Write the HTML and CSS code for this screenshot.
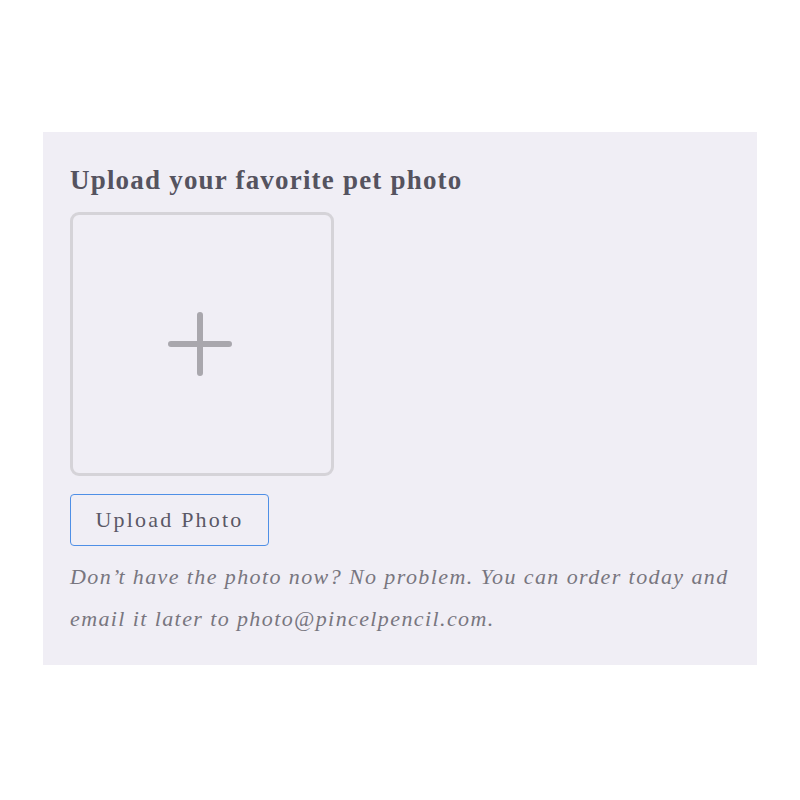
FILE: index.html
```html
<!DOCTYPE html>
<html>
<head>
<meta charset="utf-8">
<link rel="stylesheet" href="styles.css">
</head>
<body>
<div class="page">
  <section class="panel">
    <h2 class="title">Upload your favorite pet photo</h2>
    <div class="dropzone">
      <svg class="plus" width="64" height="64" viewBox="0 0 64 64">
        <path d="M32 3 V61 M3 32 H61" stroke="#a9a7ad" stroke-width="6" stroke-linecap="round" fill="none"/>
      </svg>
    </div>
    <button class="upload-btn">Upload Photo</button>
    <p class="note">Don’t have the photo now? No problem. You can order today and email it later to photo@pincelpencil.com.</p>
  </section>
</div>
</body>
</html>
```
FILE: styles.css
```css
html, body {
  margin: 0;
  padding: 0;
  background: #ffffff;
}
.page {
  padding: 132px 43px 0 43px;
}
.panel {
  background: #f0eef5;
  height: 533px;
  box-sizing: border-box;
  padding: 30px 12px 0 27px;
  font-family: "Liberation Serif", "Times New Roman", serif;
}
.title {
  margin: 0;
  font-size: 27px;
  font-weight: bold;
  letter-spacing: 1.2px;
  color: #55535f;
  line-height: 36px;
}
.dropzone {
  margin-top: 14px;
  width: 264px;
  height: 264px;
  box-sizing: border-box;
  border: 3px solid #d5d3d8;
  border-radius: 9px;
  display: flex;
  align-items: center;
  justify-content: center;
}
.plus {
  margin-right: 4px;
}
.upload-btn {
  margin-top: 18px;
  width: 199px;
  height: 52px;
  border: 1px solid #4f8fe6;
  border-radius: 4px;
  background: #f0eef5;
  font-family: "Liberation Serif", "Times New Roman", serif;
  font-size: 22px;
  letter-spacing: 2.2px;
  color: #5a5866;
  padding: 0;
  display: block;
}
.note {
  margin: 10px 0 0 0;
  font-style: italic;
  font-size: 22px;
  line-height: 42px;
  letter-spacing: 1.4px;
  color: #78767f;
}
```
